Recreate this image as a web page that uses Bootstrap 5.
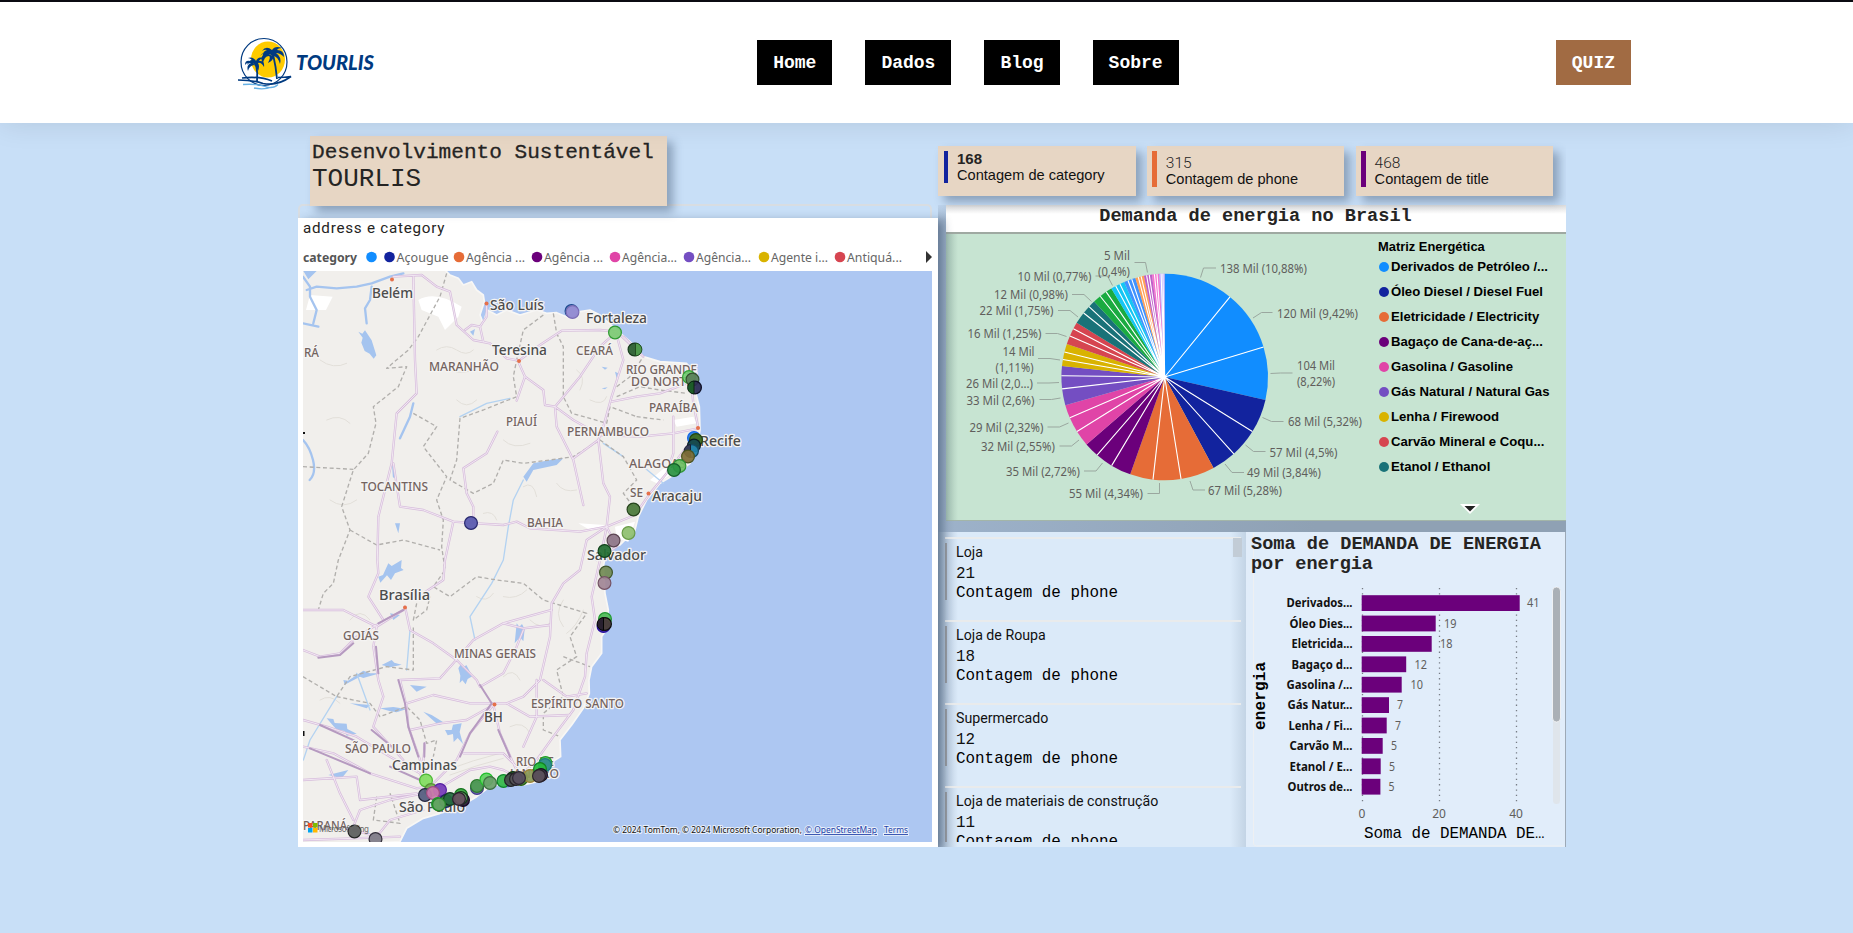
<!DOCTYPE html>
<html lang="pt-BR">
<head>
<meta charset="utf-8">
<title>Tourlis - Dados</title>
<meta name="viewport" content="width=device-width, initial-scale=1">
<link href="https://cdn.jsdelivr.net/npm/bootstrap@5.3.0/dist/css/bootstrap.min.css" rel="stylesheet">
<style>
body{background:#c8dff7;font-family:"Liberation Sans",Arial,sans-serif;color:#252423;height:933px;overflow:hidden}
.mono{font-family:"Liberation Mono","Courier New",monospace}
.din{font-family:Roboto,sans-serif}
.segoe,.dash svg text{font-family:"Noto Sans","Open Sans",sans-serif}
.dash svg text.m{font-family:"Liberation Mono","Courier New",monospace}
.dash svg{display:block}
.topbar{height:123px;border-top:2px solid #0b0b12;box-shadow:0 0 28px rgba(0,0,0,.11);padding:0 222px 0 235px;position:relative;z-index:5}
.brand{width:145px;height:54px;margin-top:1px}
.menu{gap:33px}
.menu a,.quiz{height:45px;padding:0 16px;background:#000;color:#fff;font:bold 18px/47px "Liberation Mono",monospace;text-decoration:none}
.quiz{background:#a16b43}
.dash{width:1268px;height:724px;margin-left:298px;overflow:hidden}
.colA{width:640px;position:relative;z-index:3}
.colB{width:628px}
.sand{background:#e7d6c4;box-shadow:6px 6px 9px rgba(40,60,90,.38)}
.titlecard{margin:13px 0 0 12px;width:357px;height:70px;padding:2px 2px;position:relative;z-index:4}
.titlecard .t1{font-size:21.1px;line-height:28px;-webkit-text-stroke:.3px}
.titlecard .t2{font-size:26px;line-height:26px}
.strip{height:14px;margin-top:-2px;border:2px solid #d8dde2;border-bottom:0;border-radius:5px 5px 0 0;width:634px}
.mapcard{height:629px;background:#fff;padding:0 6px 5px 5px;box-shadow:5px 3px 9px rgba(30,50,80,.45)}
.mapcard .cap{font-size:15.2px;line-height:20px;letter-spacing:.75px;height:27px}
.kpis{padding-top:23px;height:82px;gap:11.3px;position:relative}
.kpi{width:197.5px;height:50px;padding:5px 0 0 5.5px}
.kpi .ind{width:4.5px;height:36px;margin-right:9px}
.kpi .val{font-size:15px;line-height:16px}
.kpi .lab{font-size:14.6px;line-height:16px;color:#111}
.kpi .din{font-size:15.5px}
.lower{height:642px;padding-left:8px;background:linear-gradient(#c0d6ee,rgba(192,214,238,0) 16px),linear-gradient(90deg,#9db2ca,#8fa1b4 60%)}
.whead{background:#fff linear-gradient(#dcdcdc,#fff 9px);height:29px;border-bottom:2px solid #9fa9a2;font-size:18.6px;font-weight:700;line-height:24px;text-align:center;padding-right:1px}
.green{height:287px;background:linear-gradient(90deg,rgba(70,100,100,.28),rgba(70,100,100,0) 12px),#c7e4d2;border-bottom:1px solid #a3b5a8}
.leg{font:bold 13.15px/25.05px "Liberation Sans",sans-serif;color:#000}
.leg i{width:10px;height:10px;border-radius:50%;margin-right:2px}
.leg .hd{line-height:18px;font-size:12.9px;padding-left:2px}
.leg .items{padding-left:3px;margin-top:-2px}
.leg svg{margin:24px 0 0 84px}
.list{width:308px;height:315px;margin-left:-8px;background:linear-gradient(90deg,#a2b6cc,#dbeaf9 20px,#dbeaf9 292px,#c3d4e5);padding:5px 5px 5px 7px;overflow:hidden;position:relative}
.scroller{height:305px;overflow:hidden}
.entry{height:83px;border-top:2px solid #e9ebec;padding-top:4px;color:#111}
.entry .ind{width:2px;height:57px;background:#9b9ea3;margin-right:9px}
.entry .n1{font-size:14.2px;line-height:19px}
.entry .n2{font-size:15.9px;line-height:25px}
.entry .n3{font-size:15.9px;line-height:13px;color:#000}
.thumb{position:absolute;left:295px;top:6px;width:9px;height:19px;background:#c2ccd6}
.barsP{width:320px;height:315px;background:#e1edfa;border-right:1px solid #9da9b6}
</style>
</head>
<body>
<header class="topbar bg-white d-flex align-items-center justify-content-between">
  <svg class="brand" viewBox="235 36 145 54">
    <ellipse cx="268" cy="59.500" rx="17" ry="18" fill="#fecb00"/>
    <ellipse cx="264" cy="62" rx="23" ry="23.500" fill="none" stroke="#003a80" stroke-width="1.200"/>
    <g fill="#003a80">
      <path d="M256 66q-5-6-9-1 2-5 5-5-2-2-4-2 5-2 8 3 2-5 7-3-3 1-4 3 6-1 5 6-3-5-6-4 2 3 0 8-2-5-4-6-5 1-6 6-2-6 3-8-4-1-6 2 0-5 5-4z"/>
      <path d="M273 56q-7-5-10 2-1-7 4-8-2-1-5 1 4-6 10-1 3-5 10-2-4 0-5 2 7 0 7 7-4-4-8-4 6 4 4 11-2-7-6-8-1 5-6 7 3-6 1-7-5 0-6 8-4-8 2-10-2-1-5 2 3-5 8-2z"/>
    </g>
    <path d="M256 64q2 9 1 18M273 54q3 13 4 25" fill="none" stroke="#003a80" stroke-width="1.800"/>
    <path d="M238 80q15 0 25 3.500 14 3 28-7-7 1-13 1M242 78q18-2 30 3" fill="none" stroke="#003a80" stroke-width="1.700"/>
    <path d="M243 84.500q14-1 22 2t13-2M254 88q10 2 18-1" fill="none" stroke="#67b1e4" stroke-width="1.300"/>
    <text x="296" y="70" font-family="Lato,sans-serif" font-weight="900" font-style="italic" font-size="20" textLength="78" lengthAdjust="spacingAndGlyphs" fill="#003a80">TOURLIS</text>
  </svg>
  <nav class="menu d-flex mx-auto"><a href="#">Home</a><a href="#">Dados</a><a href="#">Blog</a><a href="#">Sobre</a></nav>
  <a class="quiz" href="#">QUIZ</a>
</header>

<main class="dash d-flex">
  <section class="colA">
    <div class="titlecard sand mono"><div class="t1">Desenvolvimento Sustentável</div><div class="t2">TOURLIS</div></div>
    <div class="strip"></div>
    <div class="mapcard">
      <div class="cap din">address e category</div>
      <svg width="629" height="26" viewBox="303 245 629 26">
        <g id="cats" fill="#666" font-size="12.500"></g>
        <path d="M926 251v12l6-6z" fill="#333"/>
      </svg>
      <svg width="629" height="571" viewBox="303 271 629 571">
        <rect x="303" y="271" width="629" height="571" fill="#adc7f2"/>
        <g transform="translate(290 260) scale(.33333)" fill="none" stroke-linejoin="round" stroke-linecap="round">
          <path fill="#f1efec" stroke="#f8f7f5" stroke-width="5" d="M30 20L455 20 480 45 505 55 520 75 545 65 560 90 580 105 583 125 570 165 580 190 592 150 620 165 650 150 690 165 740 150 770 160 800 158 840 175 870 155 900 150 930 165 980 210 1020 245 1060 290 1110 305 1190 310 1215 350 1215 390 1228 440 1230 510 1220 560 1200 610 1160 640 1110 670 1070 720 1045 770 1035 810 990 855 950 870 940 920 945 1000 955 1050 948 1110 935 1130 935 1180 905 1220 897 1260 898 1300 880 1345 845 1395 810 1440 812 1490 780 1510 765 1560 700 1575 640 1570 600 1580 560 1610 510 1640 450 1660 400 1675 350 1705 330 1745 30 1760Z"/>
          <g stroke="#e2dfd9" stroke-width="3">
            <path d="M440 270q30-20 60 0t50 0M480 330q40 20 90-10M90 300q40 30 80 10M110 480q40-20 70 10M500 420q30 30 60 0M860 330q30 20 10 60M900 420q40 20 50-10M640 540q30 30 80 10M700 680q30-20 40 30M800 670q20 30 60 20M580 760q30-10 40 20M120 720q40 30 80 0M820 1020q-30 40 0 80M720 1080q30 30 60 10M560 1010q30 20 50-10M640 1250q30-30 50 10M180 1080q30-40 60 0M470 1530q80-30 160-50M480 1545q80-30 160-50M660 1400q40-20 60 20M640 1010q40 10 70-20M90 1320q30-20 60 10M880 1050q-20 50-50 70"/>
          </g>
          <g fill="#fff" stroke="none"><path d="M60 105l68 5-20 40-60 0zM385 120q50-30 130 20l-10 30-40 40-20-40-50-20zM865 790l80 5-40 18zM975 800l60-15-20 60-35-10zM1150 480l60-10 10 20-60 10zM1150 640l-50 30-20-10 60-50z"/></g>
          <g stroke="#a5c4ef" fill="#a5c4ef">
            <path fill="none" stroke-width="7" d="M39 50L60 80 60 110 80 150 70 190M50 90L80 80 140 85 200 80 245 70 300 50 340 40M245 80L240 120 225 145 230 190M39 190L85 200M370 430L360 470 330 535M310 620L312 650M39 540q20 20 30 60t-10 60"/>
            <path stroke="none" d="M205 215l12 6 8-10 20 30 14 45-8 10-12-15-15-8-10-25 4-15zM700 650l30-40 50-10 40-5-20 20-70 15-20 35zM40 33l40 0-25 25zM540 215l15-8-5 20zM265 950l14-5 16-35 10 8 30-18-2 24 8 6-26 10-12 20-12-14-20 22zM300 1060l30 5-20 15zM160 1260l14 2 46-30 20 8 30 0-50 14-10-4-46 24zM275 1215l30-15 8 8 22 6-34 8zM360 1275l50 5-30 15zM505 1225l8-14 6 12 10-8 18 34-14 8-6 16-10-12-8 8 2-22zM180 1330l60 5-10 10zM400 1355l25 10 40 25-20 5zM465 1410l20 0 4-16 26-4-6 26 10 36-16-18-12 12-2-24-16 4zM110 1375l20 2 4 12 36 2 2 16 28 14-30 6-6-14-24-4zM680 1090l8 10 8-8 8 16-4 36-10-12-16 18zM315 790l15 0-5 30zM975 335l10 5-5 15zM935 320l18 3-8 6zM935 385l18-3-8 6zM270 1345l40-4 40 6-30 10-22-4zM115 1545l60-15-20 25z"/>
            <path fill="none" stroke="#b3d2f1" stroke-width="4" d="M700 660L670 720 655 800 640 900 605 970 540 1070 555 1140M510 470L590 430 660 415M940 550L1000 590M1060 620L1120 670M140 1310L60 1440 40 1500M360 1110L350 1230M240 1350L200 1240"/>
          </g>
          <g stroke="#b1afac" stroke-width="4" stroke-dasharray="12 8" stroke-linecap="butt">
            <path d="M470 40L450 110 385 230 355 270 290 325 350 320 325 380 250 440 258 490 235 580 190 630 155 740 180 810 145 900 130 970 100 1000 85 1050M39 620L190 628M370 460L440 500 400 560 470 650 440 720 460 780 455 860 465 930 430 980 480 1010 560 950 620 960 700 970 760 1020 890 1060 840 1130 860 1190 800 1230 820 1310 760 1360 760 1410 810 1430"/>
            <path d="M790 160L800 220 820 260 820 410 845 460 900 475 950 490 960 440 1040 470M760 165L700 210 680 300 670 350 680 410 580 450 510 475 500 600 480 660 550 700 610 670 640 600 700 610 780 600 850 590 930 540 1000 590 1040 660 1000 700 1030 740M820 1190L900 1220M180 810L260 855 340 840 450 870M380 1030L370 1080 410 1050 420 1010M39 1250L140 1310 180 1250 290 1220 370 1230 370 1100M140 1310L240 1330 270 1370 350 1340 390 1380 410 1450 440 1440 430 1490M260 1610L250 1680 330 1690 300 1600M980 410L1050 380 1110 390 1190 400M980 380L1020 350 1060 290M1040 470L1120 480"/>
          </g>
          <g id="roads">
            <path d="M310 50L395 45 440 80 480 95 500 195 550 240 600 250 650 295 687 302 750 255 815 212 930 210 980 215 1060 290M370 50L375 300 380 400 320 460 305 610 265 770 262 900 265 940 235 1010 280 1080M590 130L590 170 570 200 545 195 525 210M570 200L580 245M687 310L705 350 680 422M705 350L760 390 765 435 795 440 870 350 930 260 980 215M795 440L800 500 850 600 880 735M795 440L850 480 930 525 1050 530 1150 520 1225 505M850 595L925 540 940 500 965 410 1000 300 980 225M965 425L1040 410 1110 400 1190 370M1225 505L1210 430 1205 380M925 540L940 670 960 710 950 800M310 610L330 740 400 750 490 785 560 790 640 795 680 785 720 805 870 815 950 800 1035 765 1080 700 1130 640 1220 520M622 515L590 580 520 625 530 700 550 740 550 785M490 785L465 900 460 960 400 1000M950 800L890 840 870 930 820 970 785 1030 780 1130 750 1260 700 1310 650 1330M950 800L930 900 905 1010 915 1080 890 1180 885 1250 850 1350 790 1430 740 1500 700 1540M1150 470L1150 580 1130 640M950 800L980 860 920 900M1000 230L1030 260"/>
            <path d="M39 1050L160 1050 260 1100 340 1050M345 1040L360 1110 430 1150 500 1200 560 1260 570 1280M260 1100L250 1160 265 1260 280 1310 250 1400 340 1500M39 1170L90 1190 150 1180 200 1130 260 1095 340 1050M330 1260L450 1255 490 1210 550 1140 640 1090 785 1050M640 1090L700 1105 780 1095M570 1280L640 1240 680 1160 700 1110M330 1260L350 1340 355 1400 390 1500 405 1560M350 1330L430 1305 540 1330 610 1330 650 1330 720 1370 840 1365M610 1335L540 1420 500 1500 430 1570M610 1335L630 1420 670 1510 690 1550M740 1260L740 1370 700 1460M760 1260L830 1310 890 1300M610 1335L530 1380 450 1390 360 1410M39 1380L110 1400 200 1430 300 1490 390 1540 405 1580M39 1460L130 1480 240 1540 380 1585 410 1580M405 1450L400 1500 410 1570 420 1600 540 1530 600 1520 640 1530 700 1560M39 1560L200 1550 210 1620 380 1600M110 1500L150 1600 190 1680M190 1700L210 1650 300 1620 400 1600M190 1710L260 1730 300 1680 400 1650M39 1740L190 1735 330 1730M520 1480L640 1480 680 1520"/>
          </g>
          <g stroke="#b69ac0" stroke-width="6" fill="none"><path d="M265 1090L340 1050M258 1160L265 1240M325 1260L345 1330 355 1400 385 1490M570 1275L605 1330 540 1420 510 1490M85 1193L150 1185 190 1150M245 1410L330 1480M90 1395L200 1445M60 1465L240 1540M300 1520L390 1560M625 1410L660 1490M403 1450L403 1490"/></g>
        </g>
        <g id="places"></g>
        <g id="pins"></g>
        <g transform="translate(308 823)"><path fill="#f25022" d="M0 0h4.500v4.500H0z"/><path fill="#7fba00" d="M5 0h4.500v4.500H5z"/><path fill="#00a4ef" d="M0 5h4.500v4.500H0z"/><path fill="#ffb900" d="M5 5h4.500v4.500H5z"/></g>
        <text x="319" y="832" font-size="8" fill="#666" textLength="50">Microsoft Bing</text>
        <g font-size="8.700" style="paint-order:stroke" stroke="#e8effa" stroke-width="2"><text x="613" y="833" fill="#111" textLength="189" lengthAdjust="spacingAndGlyphs">© 2024 TomTom, © 2024 Microsoft Corporation,</text><g fill="#2342a8" text-decoration="underline"><text x="805" y="833" textLength="72" lengthAdjust="spacingAndGlyphs">© OpenStreetMap</text><text x="884" y="833" textLength="24" lengthAdjust="spacingAndGlyphs">Terms</text></g></g>
        <path d="M303 432h2v2h-2zM303 731h1.500v5h-1.500z" fill="#111"/>
      </svg>
    </div>
  </section>

  <section class="colB">
    <div class="kpis d-flex">
      <div class="kpi sand d-flex flex-shrink-0"><div class="ind" style="background:#12239e;height:32px"></div><div><div class="val fw-bold">168</div><div class="lab">Contagem de category</div></div></div>
      <div class="kpi sand d-flex flex-shrink-0"><div class="ind" style="background:#e66c37"></div><div class="pt-1"><div class="val din fw-light">315</div><div class="lab">Contagem de phone</div></div></div>
      <div class="kpi sand d-flex flex-shrink-0"><div class="ind" style="background:#6b007b"></div><div class="pt-1"><div class="val din fw-light">468</div><div class="lab">Contagem de title</div></div></div>
    </div>
    <div class="lower">
      <div class="whead mono">Demanda de energia no Brasil</div>
      <div class="green d-flex">
        <svg width="430" height="286" viewBox="946 234 430 286" class="flex-shrink-0">
          <g id="pie"></g>
          <g fill="none" stroke="#9aa79f" stroke-width="1"><path d="M1200.500 277.500l3-9.500h12.500M1253 318l8.500-5.500h11M1270.500 373.500l10-.5h12M1262.500 417.500l9 4h12M1245.500 445l8 6.500h12M1225 464l7 8.500h12M1190 481l3 9h12M1159.500 483v10.500h-12M1102.500 463l-6.500 8h-12M1079 440l-7.500 6h-12M1068.500 423l-9 4h-12M1060.500 398l-9 1.500h-12M1059 382.500l-10 .5h-12M1060 360l-10-1.500h-12M1066.500 336.500l-9-3h-12M1078 317l-8-6.500h-12M1091.500 301.500l-7.500-7h-12M1112.500 285.500l-5-9.500h-12M1147.500 272.500l-2-10h-11"/></g>
          <g id="plabels" fill="#605e5c" font-size="12"></g>
        </svg>
        <div class="leg flex-grow-1 pt-1">
          <div class="hd">Matriz Energética</div>
          <div id="legend" class="items"></div>
          <svg width="20" height="12" viewBox="0 0 20 12"><path d="M0 1h20L10 11z" fill="#fff"/><path d="M4.500 3h11L10 8.500z" fill="#222"/></svg>
        </div>
      </div>
      <div class="d-flex" style="margin-top:11px">
        <div class="list flex-shrink-0">
          <div class="scroller" id="rows"></div>
          <div class="thumb"></div>
        </div>
        <div class="barsP">
          <svg width="319" height="315" viewBox="1246 532 319 315">
            <path d="M1253.500 533v310q0 3 3 3h307" fill="none" stroke="#eef0f2"/>
            <g font-weight="700" font-size="18.600" fill="#252423"><text class="m" x="1251" y="549" textLength="290">Soma de DEMANDA DE ENERGIA</text><text class="m" x="1251" y="569" textLength="122">por energia</text></g>
            <path d="M1362.500 588v216M1439.500 588v216M1516.500 588v216" stroke="#777d85" stroke-width="1.300" stroke-dasharray="1.300 4"/>
            <g id="bars"></g>
            <text class="m" transform="translate(1265 730) rotate(-90)" font-weight="700" font-size="16" textLength="68">energia</text>
            <g fill="#605e5c" font-size="12" text-anchor="middle"><text x="1362" y="818">0</text><text x="1439" y="818">20</text><text x="1516" y="818">40</text></g>
            <text class="m" x="1364" y="838" font-size="15.900" textLength="171">Soma de DEMANDA DE</text><text x="1535" y="838" font-size="12">…</text>
            <rect x="1553" y="587" width="7" height="217" rx="3.500" fill="#dfe5eb"/><rect x="1552.500" y="587" width="8" height="135" rx="4" fill="#aab0b6" stroke="#fff" stroke-width=".7"/>
          </svg>
        </div>
      </div>
    </div>
  </section>
</main>
<script>
const $=id=>document.getElementById(id);
const T=(x,y,s,w,extra='')=>`<text x="${x}" y="${y}" ${w?`textLength="${w}" lengthAdjust="spacingAndGlyphs"`:''} ${extra}>${s}</text>`;

// Map legend: colour, dot x, label, label width
$('cats').innerHTML=T(303,262,'category',54,'font-weight="700" fill="#555"')+
[['#118dff',371.5,'',0],['#12239e',389.5,'Açougue',52],['#e66c37',459,'Agência ...',59],['#6b007b',537,'Agência ...',59],['#e044a7',615,'Agência...',55],['#744ec2',689,'Agência...',55],['#d9b300',764,'Agente i...',57],['#d64550',840,'Antiquá...',55]]
.map(([c,x,s,w])=>`<circle cx="${x}" cy="257" r="5.300" fill="${c}"/>`+(s?T(x+7,262,s,w):'')).join('');

// Roads get a light core over a wider casing
const roads=$('roads'),lines=roads.innerHTML;
roads.innerHTML=[['#d6bcdb',7],['#f2e8f3',3]].map(([c,w])=>`<g stroke="${c}" stroke-width="${w}">${lines}</g>`).join('');

// Place labels: x, baseline, text, width, kind (c = city, s = state)
$('places').innerHTML=[[372,298,'Belém',41,'c'],[490,310,'São Luís',54,'c'],[586,323,'Fortaleza',61,'c'],[492,355,'Teresina',55,'c'],[700,446,'Recife',41,'c'],[652,501,'Aracaju',50,'c'],[587,560,'Salvador',59,'c'],[379,600,'Brasília',51,'c'],[484,722,'BH',19,'c'],[392,770,'Campinas',65,'c'],[399,812,'São Paulo',66,'c'],
[304,357,'RÁ',15,'s'],[429,371,'MARANHÃO',70,'s'],[576,355,'CEARÁ',37,'s'],[626,373.5,'RIO GRANDE',71,'s'],[631,385.5,'DO NORTE',62,'s'],[649,412,'PARAÍBA',49,'s'],[506,426,'PIAUÍ',31,'s'],[567,436,'PERNAMBUCO',82,'s'],[629,468,'ALAGOAS',57,'s'],[361,491,'TOCANTINS',67,'s'],[630,497,'SE',13,'s'],[527,527,'BAHIA',36,'s'],[343,640,'GOIÁS',36,'s'],[454,658,'MINAS GERAIS',82,'s'],[531,708,'ESPÍRITO SANTO',93,'s'],[345,753,'SÃO PAULO',66,'s'],[516,766,'RIO DE',38,'s'],[510,778,'JANEIRO',49,'s'],[303,830,'PARANÁ',44,'s']]
.map(([x,y,s,w,k])=>T(x,y,s,w,(k=='c'?'font-size="14.500" font-weight="500" fill="#4c4c4c"':'font-size="11.800" font-weight="500" fill="#73635f"')+' stroke="#f5f4f3" stroke-width="2.500" stroke-linejoin="round" style="paint-order:stroke"')).join('');

// City dots
const dots=[[392,279.5],[486.5,303.5],[519,361],[698,428],[648.5,493.5],[405,607.5],[494.5,704.5]];
// Pins: x, y, fill, outline, optional half (h = right, g = left)
const P=[[571.5,311,'#2878a8','#204a90'],[572.5,312,'#9d8fd6','#7a6db5'],[615,332.5,'#7dcb74','#2f9a32'],[634.5,349.5,'#285e2e','#163a1b'],[635.5,349.5,'#4f9a4d','#204f20','h'],
[689,377,'#71ce70','#34a037'],[692.5,379.5,'#5b805a','#35502f'],[695,387.5,'#2b2b52','#0c0c22'],[694,387.5,'#1d5c28','#0d2413','g'],
[694,438,'#2a80dd','#1164e8'],[696,440,'#3e6b1b','#24460d'],[694,445.5,'#164850','#0a1d24'],[692,451,'#2285ad','#124a65'],[690.5,451,'#353b55','#191f30','g'],[688,456.5,'#806e36','#4b5320'],[679.5,466,'#6dbf62','#2e9535'],[674,470,'#2a9242','#15602a'],
[633.5,509.5,'#4b7a3a','#26431c'],[628.5,533,'#8fc070','#6a9c48'],[613.5,540.5,'#8d7587','#5b4452'],[604.5,551,'#246e33','#12431c'],[606,572.5,'#738b54','#3f562b'],[604.5,583,'#a18796','#755365'],
[605,619,'#4cba56','#229932'],[603.5,626,'#37229c','#2a10a0'],[605,624,'#4a4035','#0c0c0c'],[603.5,624,'#28202f','#050505','g'],[471,523,'#5858ae','#28286e'],
[426,780.5,'#82df60','#4cb834'],[431,790,'#75b052','#559232'],[425,795,'#555c7f','#25273f'],[440,790,'#753ab8','#5720a4'],[433,793,'#cb78ae','#9c4c80'],[438,804,'#37a84a','#1b9b2c'],[446,801,'#2b6a35','#20205f'],[450,799,'#256c40','#113c22'],[439,804.5,'#65a463','#28882c'],[461,795,'#39a93e','#15731d'],[463,800,'#2a1835','#160822'],[461,798,'#6aa968','#143b18'],[459,799,'#675060','#2a202c'],
[477,788,'#6f63b5','#423a8c'],[477,786,'#4f9d52','#2b7a2f'],[486.5,779.5,'#5cd35f','#22bd2c'],[490,783,'#6a9f6c','#3f7142'],[503.5,781,'#33b848','#0e862b'],[507.5,780.5,'#7584d1','#4d5bb5','h'],[513,778,'#225c27','#0d310f'],[511,780,'#4a5050','#202525'],[521,779,'#4f8c30','#245f15'],[516,779,'#565458','#242126'],[530,776,'#8b9a57','#9b8337'],[519,778,'#585060','#2d2733'],
[545.5,763,'#56bd5e','#21a02b'],[545,765,'#308d8f','#1c7d7c'],[540,769,'#26ba3a','#128120'],[541,775,'#42304e','#171122'],[539,776,'#5b525b','#292229'],[354.5,831.5,'#5b5e5c','#242625'],[375.5,839,'#7e7b86','#35313d']];
$('pins').innerHTML=dots.map(([x,y])=>`<circle cx="${x}" cy="${y}" r="2" fill="#e5704a"/>`).join('')+
P.map(([x,y,f,s,h])=>h?`<path d="M${x} ${y-6.4}A6.4 6.4 0 0 ${h=='h'?1:0} ${x} ${y+6.4}Z" fill="${f}" stroke="${s}"/>`:`<circle cx="${x}" cy="${y}" r="6.400" fill="${f}" fill-opacity=".93" stroke="${s}" stroke-width="1.200"/>`).join('');

// Pie: colour followed by the clockwise end angle of each slice
const cx=1164.7,cy=377,R=103.3,pt=a=>{a=a*Math.PI/180;return (cx+R*Math.sin(a)).toFixed(2)+' '+(cy-R*Math.cos(a)).toFixed(2)};
let a0=0,pie='',ln='';
[['#118dff',39.2,73.1,102.8],['#12239e',121.9,138,151.8],['#e66c37',170.9,186.5,199.5],['#6b007b',210.9,220.9,229.2],['#e044a7',238.1,246.7,254.2],['#744ec2',263.4,270.7,276.1],['#d9b300',279.8,284,288.7],['#d64550',293.4,297.8,301.6],['#197278',308.3,312.9,316.9],['#1aab40',321.4,325.5,328.9],['#15c6f4',331.7,334.3,336.9],['#4092ff',339.2,341.4,343.5],['#ffa058',345.2,346.8,348.4],['#be5dc9',349.9,351.4,352.9],['#f472d0',354.3,355.7,357],['#b5a1ff',358,359,360]]
.forEach(([c,...as])=>{as.forEach((a,i)=>{pie+=`<path d="M${cx} ${cy}L${pt(a0)}A${R} ${R} 0 0 1 ${pt(a)}Z" fill="${c}"/>`;if(i<2)ln+=`M${cx} ${cy}L${pt(a)}`;a0=a})});
$('pie').innerHTML=pie+`<path d="${ln}" stroke="#fff" stroke-width="1.100"/>`;
$('plabels').innerHTML=[[1220,273,'138 Mil (10,88%)',87],[1277,318,'120 Mil (9,42%)',81],[1297,370,'104 Mil',38],[1297,386,'(8,22%)',38],[1288,426,'68 Mil (5,32%)',74],[1269.5,457,'57 Mil (4,5%)',68],[1247,477,'49 Mil (3,84%)',74],[1208,495,'67 Mil (5,28%)',74],[1069,498,'55 Mil (4,34%)',74],[1006,476,'35 Mil (2,72%)',74],[981,451,'32 Mil (2,55%)',74],[969.5,432,'29 Mil (2,32%)',74],[966.5,405,'33 Mil (2,6%)',68],[966,388,'26 Mil (2,0...)',67],[995.5,372,'(1,11%)',38],[1002.5,356,'14 Mil',32],[967.5,338,'16 Mil (1,25%)',74],[979.5,315,'22 Mil (1,75%)',74],[994,299,'12 Mil (0,98%)',74],[1017.5,281,'10 Mil (0,77%)',74],[1104,260,'5 Mil',26],[1098,276,'(0,4%)',32]].map(a=>T(...a)).join('');

$('legend').innerHTML=[['#118dff','Derivados de Petróleo /...'],['#12239e','Óleo Diesel / Diesel Fuel'],['#e66c37','Eletricidade / Electricity'],['#6b007b','Bagaço de Cana-de-aç...'],['#e044a7','Gasolina / Gasoline'],['#744ec2','Gás Natural / Natural Gas'],['#d9b300','Lenha / Firewood'],['#d64550','Carvão Mineral e Coqu...'],['#197278','Etanol / Ethanol']]
.map(([c,s])=>`<div class="d-flex align-items-center text-nowrap"><i style="background:${c}"></i>${s}</div>`).join('');

$('rows').innerHTML=[['Loja',21],['Loja de Roupa',18],['Supermercado',12],['Loja de materiais de construção',11]]
.map(([n,v])=>`<div class="entry d-flex"><div class="ind"></div><div><div class="n1 din">${n}</div><div class="n2 mono">${v}</div><div class="n3 mono">Contagem de phone</div></div></div>`).join('');

// Bars: label, label width, value, bar length, value x
$('bars').innerHTML=[['Derivados...',66,41,158,1527],['Óleo Dies...',63,19,74,1444],['Eletricida...',61,18,70,1440],['Bagaço d...',61,12,44.5,1414.5],['Gasolina /...',66,10,40,1410.5],['Gás Natur...',65,7,27.3,1397],['Lenha / Fi...',64,7,25,1395],['Carvão M...',63,5,21,1391],['Etanol / E...',63,5,19,1389],['Outros de...',65,5,18.7,1388.5]]
.map(([s,w,v,bw,vx],i)=>{const y=607.3+i*20.4;return T(1352.5-w,y,s,w,'font-weight="700" font-size="12" fill="#111"')+`<rect x="1361.700" y="${y-12.1}" width="${bw}" height="15.800" fill="#6b007b"/>`+T(vx,y,v,v>9?12.5:6,'font-size="12" fill="#605e5c"')}).join('');
</script>
</body>
</html>
